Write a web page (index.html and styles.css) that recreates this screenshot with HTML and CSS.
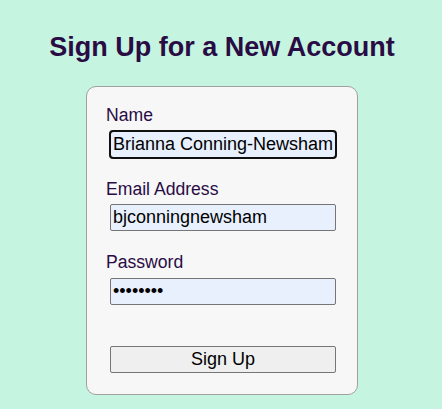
FILE: index.html
```html
<!DOCTYPE html>
<html lang="en">
<head>
<meta charset="utf-8">
<title>Sign Up</title>
<link rel="stylesheet" href="styles.css">
</head>
<body>
<h1 class="title">Sign Up for a New Account</h1>
<form class="card">
  <div class="field">
    <label class="label" for="name">Name</label>
    <input class="input is-focused" id="name" type="text" value="Brianna Conning-Newsham">
  </div>
  <div class="field">
    <label class="label" for="email">Email Address</label>
    <input class="input" id="email" type="text" value="bjconningnewsham">
  </div>
  <div class="field">
    <label class="label" for="password">Password</label>
    <input class="input" id="password" type="password" value="12345678">
  </div>
  <button class="button" type="button">Sign Up</button>
</form>
</body>
</html>
```

FILE: styles.css
```css
html, body {
  margin: 0;
  padding: 0;
}
body {
  padding-left: 2px;
  background: #c5f5e0;
  font-family: "Liberation Sans", Arial, sans-serif;
  color: #2a0c45;
}
.title {
  margin: 32px 0 23px;
  font-size: 27px;
  line-height: 31px;
  font-weight: bold;
  text-align: center;
  color: #2a0c45;
}
.card {
  box-sizing: border-box;
  width: 272px;
  margin: 0 auto;
  padding: 18px 21px 21px 19px;
  background: #f7f7f7;
  border: 1px solid #a0a0a0;
  border-radius: 10px;
  display: flex;
  flex-direction: column;
}
.field {
  display: flex;
  flex-direction: column;
  align-items: flex-start;
  margin-bottom: 21px;
}
.field:last-of-type {
  margin-bottom: 41px;
}
.label {
  font-size: 17.6px;
  line-height: 20px;
  margin-bottom: 5.5px;
  color: #2a0c45;
}
.input {
  box-sizing: border-box;
  width: 226px;
  height: 27px;
  margin: 0 0 0 4px;
  padding: 1px 2px;
  font-family: "Liberation Sans", Arial, sans-serif;
  font-size: 18px;
  color: #000;
  background: #e8f0fe;
  border: 1px solid #767676;
  border-radius: 2px;
}
.is-focused {
  outline: 2px solid #101010;
  outline-offset: -1px;
  border-radius: 3px;
}
.button {
  box-sizing: border-box;
  width: 226px;
  height: 27px;
  margin: 0 0 0 4px;
  padding: 0;
  font-family: "Liberation Sans", Arial, sans-serif;
  font-size: 18px;
  color: #000;
  background: #efefef;
  border: 1px solid #767676;
  border-radius: 2px;
}
```
